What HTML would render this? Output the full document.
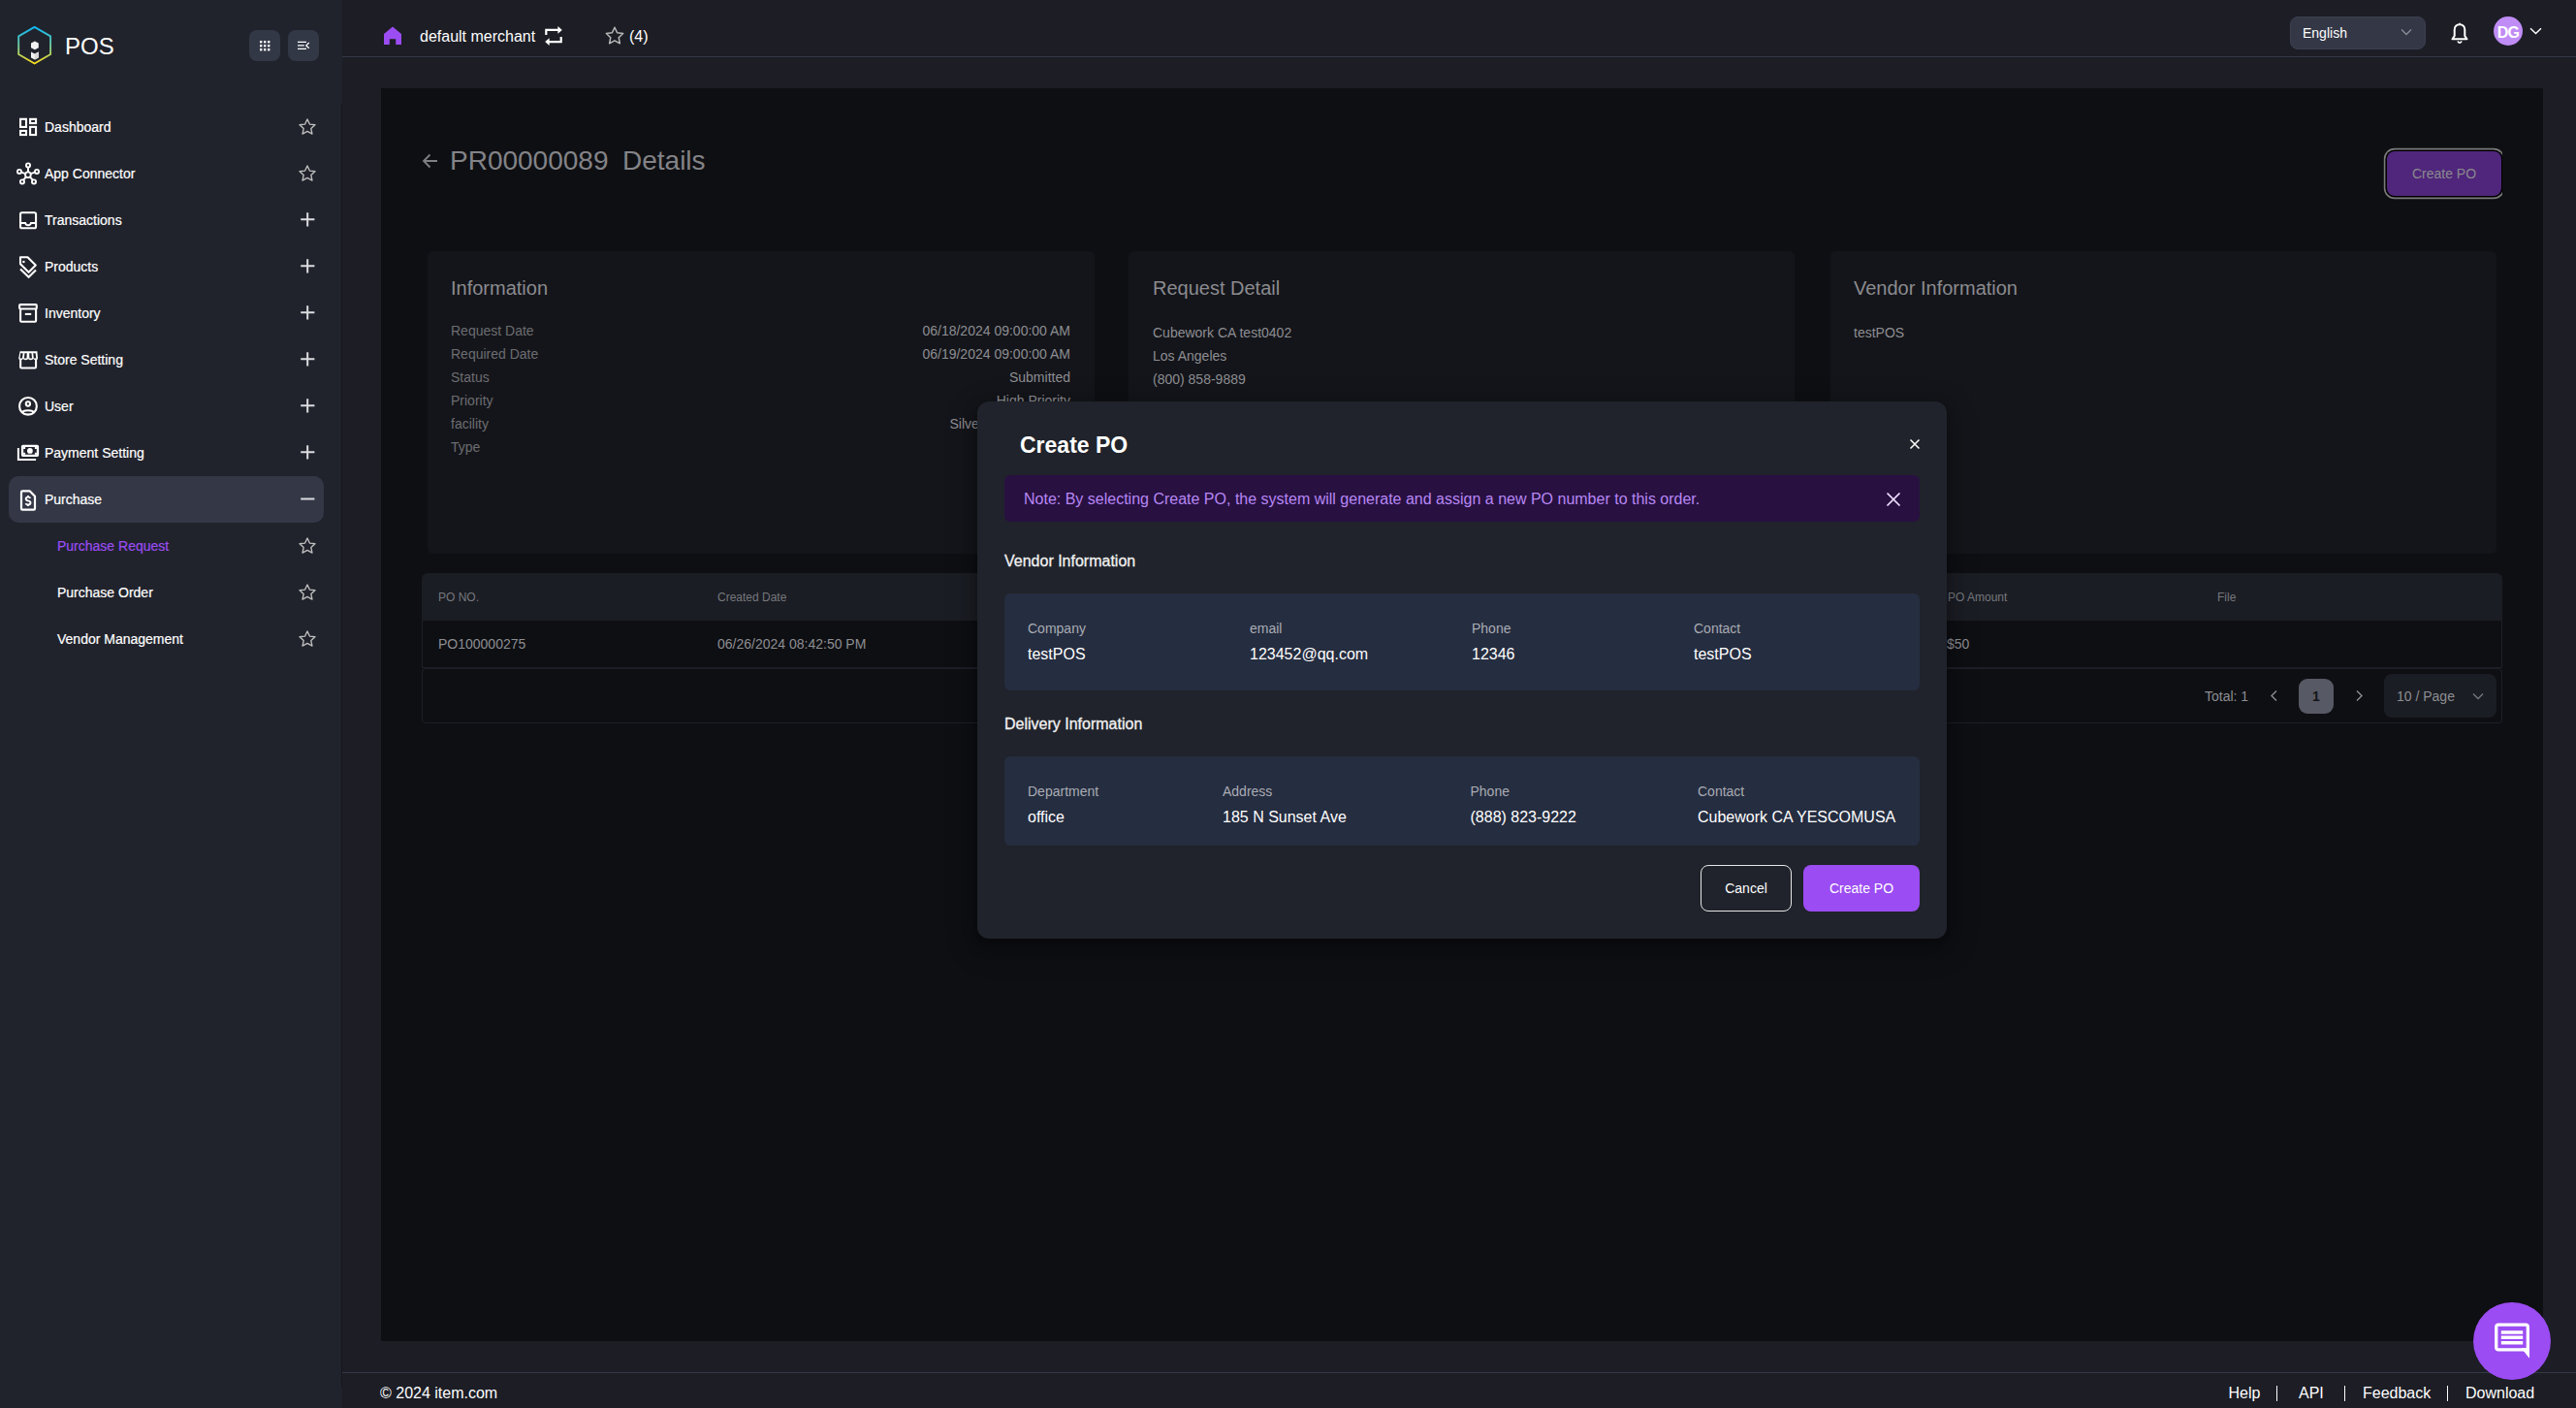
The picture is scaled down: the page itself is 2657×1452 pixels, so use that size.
<!DOCTYPE html>
<html>
<head>
<meta charset="utf-8">
<style>
*{margin:0;padding:0;box-sizing:border-box;}
html,body{width:2657px;height:1452px;overflow:hidden;background:#1c1d25;font-family:"Liberation Sans",sans-serif;}
.a{position:absolute;white-space:nowrap;line-height:1;}
svg{display:block;}
</style>
</head>
<body>
<div style="position:absolute;left:0px;top:0px;width:353px;height:1452px;background:#21232c;border-radius:0px;"></div>
<div style="position:absolute;left:352px;top:107px;width:1px;height:1324px;background:#17181e;border-radius:0px;"></div>
<div style="position:absolute;left:353px;top:0px;width:2304px;height:58px;background:#1c1d25;border-radius:0px;"></div>
<div style="position:absolute;left:353px;top:58px;width:2304px;height:1px;background:#343946;border-radius:0px;"></div>
<svg style="position:absolute;left:14px;top:24px;" width="44" height="46" viewBox="0 0 44 46" fill="none"><defs><linearGradient id="hg" x1="0" y1="0" x2="0" y2="1"><stop offset="0" stop-color="#0fb6f2"/><stop offset="0.5" stop-color="#6cc9a0"/><stop offset="1" stop-color="#fddc1c"/></linearGradient></defs><path d="M21.6 3.9 L38.1 13.4 L38.1 32 L21.6 41.5 L5.2 32 L5.2 13.4 Z" stroke="url(#hg)" stroke-width="1.9" stroke-linejoin="round"/><path d="M18 20.5 L21.9 18.6 L25.8 20.5 L25.8 25.3 L21.9 27.2 L18 25.3 Z" fill="#f2f2f2"/><path d="M18 29.5 L21.9 31.4 L25.8 29.5 L25.8 35.5 L21.9 37.4 L18 35.5 Z" fill="#f0f0f0"/><path d="M21.9 31.4 L25.8 29.5 L25.8 35.5 L21.9 37.4 Z" fill="#d8d8d8"/></svg>
<div class="a" style="left:67px;top:36.18px;font-size:24px;color:#fff;font-weight:400;">POS</div>
<div style="position:absolute;left:257px;top:31px;width:32px;height:32px;background:#333846;border-radius:8px;"></div>
<div style="position:absolute;left:297px;top:31px;width:32px;height:32px;background:#333846;border-radius:8px;"></div>
<svg style="position:absolute;left:267px;top:41px;" width="13" height="13" viewBox="0 0 13 13" fill="none"><rect x="1" y="1" width="2.4" height="2.4" fill="#fff"/><rect x="1" y="5" width="2.4" height="2.4" fill="#fff"/><rect x="1" y="9" width="2.4" height="2.4" fill="#fff"/><rect x="5" y="1" width="2.4" height="2.4" fill="#fff"/><rect x="5" y="5" width="2.4" height="2.4" fill="#fff"/><rect x="5" y="9" width="2.4" height="2.4" fill="#fff"/><rect x="9" y="1" width="2.4" height="2.4" fill="#fff"/><rect x="9" y="5" width="2.4" height="2.4" fill="#fff"/><rect x="9" y="9" width="2.4" height="2.4" fill="#fff"/></svg>
<svg style="position:absolute;left:305px;top:41px;" width="16" height="12" viewBox="0 0 16 12" fill="none"><path d="M2 2.4h9M2 5.9h6.8M2 9.4h9" stroke="#fff" stroke-width="1.25"/><path d="M13.8 3 L10.8 5.9 L13.8 8.8" stroke="#fff" stroke-width="1.3" fill="none"/></svg>
<div style="position:absolute;left:9px;top:491px;width:325px;height:48px;background:#333746;border-radius:10px;"></div>
<div class="a" style="left:46px;top:124.15px;font-size:14px;color:#fff;font-weight:400;-webkit-text-stroke:0.2px #fff;">Dashboard</div>
<div class="a" style="left:46px;top:172.15px;font-size:14px;color:#fff;font-weight:400;-webkit-text-stroke:0.2px #fff;">App Connector</div>
<div class="a" style="left:46px;top:220.15px;font-size:14px;color:#fff;font-weight:400;-webkit-text-stroke:0.2px #fff;">Transactions</div>
<div class="a" style="left:46px;top:268.15px;font-size:14px;color:#fff;font-weight:400;-webkit-text-stroke:0.2px #fff;">Products</div>
<div class="a" style="left:46px;top:316.15px;font-size:14px;color:#fff;font-weight:400;-webkit-text-stroke:0.2px #fff;">Inventory</div>
<div class="a" style="left:46px;top:364.15px;font-size:14px;color:#fff;font-weight:400;-webkit-text-stroke:0.2px #fff;">Store Setting</div>
<div class="a" style="left:46px;top:412.15px;font-size:14px;color:#fff;font-weight:400;-webkit-text-stroke:0.2px #fff;">User</div>
<div class="a" style="left:46px;top:460.15px;font-size:14px;color:#fff;font-weight:400;-webkit-text-stroke:0.2px #fff;">Payment Setting</div>
<div class="a" style="left:46px;top:508.15px;font-size:14px;color:#fff;font-weight:400;-webkit-text-stroke:0.2px #fff;">Purchase</div>
<div class="a" style="left:59px;top:556.15px;font-size:14px;color:#9b4cf2;font-weight:400;-webkit-text-stroke:0.2px #9b4cf2;">Purchase Request</div>
<div class="a" style="left:59px;top:604.15px;font-size:14px;color:#fff;font-weight:400;-webkit-text-stroke:0.2px #fff;">Purchase Order</div>
<div class="a" style="left:59px;top:652.15px;font-size:14px;color:#fff;font-weight:400;-webkit-text-stroke:0.2px #fff;">Vendor Management</div>
<svg style="position:absolute;left:306px;top:120px;" width="22" height="22" viewBox="0 0 24 24" fill="none"><path d="M12 3.2l2.6 5.6 6.1.7-4.5 4.2 1.2 6.1L12 16.8l-5.4 3 1.2-6.1-4.5-4.2 6.1-.7z" stroke="#bdbdbd" stroke-width="1.5" stroke-linejoin="round"/></svg>
<svg style="position:absolute;left:306px;top:168px;" width="22" height="22" viewBox="0 0 24 24" fill="none"><path d="M12 3.2l2.6 5.6 6.1.7-4.5 4.2 1.2 6.1L12 16.8l-5.4 3 1.2-6.1-4.5-4.2 6.1-.7z" stroke="#bdbdbd" stroke-width="1.5" stroke-linejoin="round"/></svg>
<svg style="position:absolute;left:309.8px;top:218.8px;" width="15" height="15" viewBox="0 0 15 15" fill="none"><path d="M7.2 0.3v14.2M0.2 7.3h14.2" stroke="#dcdde0" stroke-width="2"/></svg>
<svg style="position:absolute;left:309.8px;top:266.8px;" width="15" height="15" viewBox="0 0 15 15" fill="none"><path d="M7.2 0.3v14.2M0.2 7.3h14.2" stroke="#dcdde0" stroke-width="2"/></svg>
<svg style="position:absolute;left:309.8px;top:314.8px;" width="15" height="15" viewBox="0 0 15 15" fill="none"><path d="M7.2 0.3v14.2M0.2 7.3h14.2" stroke="#dcdde0" stroke-width="2"/></svg>
<svg style="position:absolute;left:309.8px;top:362.8px;" width="15" height="15" viewBox="0 0 15 15" fill="none"><path d="M7.2 0.3v14.2M0.2 7.3h14.2" stroke="#dcdde0" stroke-width="2"/></svg>
<svg style="position:absolute;left:309.8px;top:410.8px;" width="15" height="15" viewBox="0 0 15 15" fill="none"><path d="M7.2 0.3v14.2M0.2 7.3h14.2" stroke="#dcdde0" stroke-width="2"/></svg>
<svg style="position:absolute;left:309.8px;top:458.8px;" width="15" height="15" viewBox="0 0 15 15" fill="none"><path d="M7.2 0.3v14.2M0.2 7.3h14.2" stroke="#dcdde0" stroke-width="2"/></svg>
<svg style="position:absolute;left:309.8px;top:512.5px;" width="15" height="3" viewBox="0 0 15 3" fill="none"><path d="M0.2 1.5h14.2" stroke="#dcdde0" stroke-width="2"/></svg>
<svg style="position:absolute;left:306px;top:552px;" width="22" height="22" viewBox="0 0 24 24" fill="none"><path d="M12 3.2l2.6 5.6 6.1.7-4.5 4.2 1.2 6.1L12 16.8l-5.4 3 1.2-6.1-4.5-4.2 6.1-.7z" stroke="#bdbdbd" stroke-width="1.5" stroke-linejoin="round"/></svg>
<svg style="position:absolute;left:306px;top:600px;" width="22" height="22" viewBox="0 0 24 24" fill="none"><path d="M12 3.2l2.6 5.6 6.1.7-4.5 4.2 1.2 6.1L12 16.8l-5.4 3 1.2-6.1-4.5-4.2 6.1-.7z" stroke="#bdbdbd" stroke-width="1.5" stroke-linejoin="round"/></svg>
<svg style="position:absolute;left:306px;top:648px;" width="22" height="22" viewBox="0 0 24 24" fill="none"><path d="M12 3.2l2.6 5.6 6.1.7-4.5 4.2 1.2 6.1L12 16.8l-5.4 3 1.2-6.1-4.5-4.2 6.1-.7z" stroke="#bdbdbd" stroke-width="1.5" stroke-linejoin="round"/></svg>
<svg style="position:absolute;left:14px;top:116px;" width="30" height="30" viewBox="0 0 30 30" fill="none"><rect x="7.05" y="6.8" width="5.95" height="8.15" stroke="#fff" stroke-width="2.1" fill="none"/><rect x="17.1" y="6.85" width="5.95" height="4.2" stroke="#fff" stroke-width="2.1" fill="none"/><rect x="7.05" y="18.95" width="5.95" height="4.1" stroke="#fff" stroke-width="2.1" fill="none"/><rect x="17.1" y="14.9" width="5.95" height="8.15" stroke="#fff" stroke-width="2.1" fill="none"/></svg>
<svg style="position:absolute;left:14px;top:164px;" width="30" height="30" viewBox="0 0 30 30" fill="none"><g stroke="#fff" stroke-width="1.9" fill="none"><circle cx="14.9" cy="16.25" r="2.85"/><circle cx="15" cy="6.4" r="2.05"/><circle cx="6" cy="12.9" r="2.05"/><circle cx="24" cy="12.9" r="2.05"/><circle cx="8.95" cy="23.4" r="2.05"/><circle cx="21" cy="23.4" r="2.05"/><path d="M15 8.5V13.4M8 13.6L12.2 15.2M22 13.6L17.7 15.2M10.1 21.6L12.9 18.5M19.8 21.6L17 18.5"/></g></svg>
<svg style="position:absolute;left:14px;top:212px;" width="30" height="30" viewBox="0 0 30 30" fill="none"><rect x="7.05" y="7.25" width="16" height="16" rx="1.6" stroke="#fff" stroke-width="2.1" fill="none"/><path d="M7 18H12.1C12.6 19.6 13.6 20.3 15.05 20.3S17.5 19.6 18 18H23" stroke="#fff" stroke-width="2.1" fill="none"/></svg>
<svg style="position:absolute;left:14px;top:260px;" width="30" height="30" viewBox="0 0 30 30" fill="none"><path d="M7 5.3H14.5L22.8 13.6L15.6 20.8L7 12.3Z" stroke="#fff" stroke-width="2.1" fill="none" stroke-linejoin="round"/><rect x="9.3" y="8.9" width="2.2" height="2.2" fill="#fff"/><path d="M7 17.5L15.6 25.7L23 18.5" stroke="#fff" stroke-width="2.1" fill="none"/></svg>
<svg style="position:absolute;left:14px;top:308px;" width="30" height="30" viewBox="0 0 30 30" fill="none"><rect x="6.1" y="6.1" width="17.7" height="4.4" rx="1" stroke="#fff" stroke-width="2.1" fill="none"/><path d="M7.1 10.5V22.8Q7.1 23.8 8.1 23.8H22.1Q23.1 23.8 23.1 22.8V10.5" stroke="#fff" stroke-width="2.1" fill="none"/><rect x="11.8" y="14.9" width="6.4" height="2.1" fill="#fff"/></svg>
<svg style="position:absolute;left:14px;top:354px;" width="30" height="30" viewBox="0 0 30 30" fill="none"><path d="M6.6 8.2H24.4L25 15.6Q25 17.3 23.2 17.3Q21.3 17.3 20.3 15.9Q19.3 17.3 17.6 17.3Q15.9 17.3 15.1 15.9Q14.2 17.3 12.5 17.3Q10.8 17.3 9.9 15.9Q8.9 17.3 7.2 17.3Q5.2 17.3 5.2 15.6Z" fill="#fff"/><path d="M7.2 10.3H9.7L8.9 15.6H6.6Z M11.4 10.3H13.7L13.5 15.6H10.9Z M16.2 10.3H18.5L19 15.6H16.4Z M20.2 10.3H22.6L23.3 15.6H20.8Z" fill="#21232c"/><path d="M7.15 16.5V24.5Q7.15 25.55 8.2 25.55H22Q23.05 25.55 23.05 24.5V16.5" stroke="#fff" stroke-width="2.1" fill="none"/></svg>
<svg style="position:absolute;left:14px;top:404px;" width="30" height="30" viewBox="0 0 30 30" fill="none"><defs><clipPath id="uc"><circle cx="14.95" cy="14.9" r="9"/></clipPath></defs><circle cx="14.95" cy="14.9" r="8.9" stroke="#fff" stroke-width="2.1" fill="none"/><circle cx="14.9" cy="12.5" r="2.15" stroke="#fff" stroke-width="2" fill="none"/><ellipse cx="14.9" cy="21.4" rx="5.6" ry="2.2" stroke="#fff" stroke-width="2" fill="none" clip-path="url(#uc)"/></svg>
<svg style="position:absolute;left:14px;top:452px;" width="30" height="30" viewBox="0 0 30 30" fill="none"><rect x="9.05" y="7.95" width="15.9" height="9.9" rx="0.6" stroke="#fff" stroke-width="2.3" fill="none"/><rect x="10.1" y="9" width="2" height="2" fill="#fff"/><rect x="21.9" y="9" width="2" height="2" fill="#fff"/><rect x="10.1" y="14.8" width="2" height="2" fill="#fff"/><rect x="21.9" y="14.8" width="2" height="2" fill="#fff"/><circle cx="16.9" cy="12.9" r="2.9" fill="#fff"/><path d="M4.9 9.9V22H23.1" stroke="#fff" stroke-width="2" fill="none"/></svg>
<svg style="position:absolute;left:14px;top:500px;" width="30" height="30" viewBox="0 0 30 30" fill="none"><path d="M8 7.5Q8 6.3 9.2 6.3H16.6L22 11.7V24.5Q22 25.7 20.8 25.7H9.2Q8 25.7 8 24.5Z" stroke="#fff" stroke-width="2.2" fill="none" stroke-linejoin="round"/><path d="M17.4 13.9C17 13 16.2 12.6 15 12.6C13.6 12.6 12.7 13.4 12.7 14.5C12.7 15.9 14 16.2 15 16.4C16.2 16.6 17.5 17.1 17.5 18.6C17.5 19.8 16.5 20.5 15 20.5C13.8 20.5 12.9 20 12.5 19.1" stroke="#fff" stroke-width="1.9" fill="none"/><path d="M15 11.1V12.8M15 20.3V22" stroke="#fff" stroke-width="1.9"/></svg>
<svg style="position:absolute;left:396px;top:27px;" width="18" height="19" viewBox="0 0 18 19" fill="none"><path d="M9 0.5 L18 8 V19 H12.2 V13.2 H5.8 V19 H0 V8 Z" fill="#9b4cf2"/></svg>
<div class="a" style="left:433px;top:29.96px;font-size:16px;color:#fff;font-weight:400;">default merchant</div>
<svg style="position:absolute;left:559.5px;top:26.2px;" width="22" height="22" viewBox="0 0 20 20" fill="none"><path d="M3 9 V4.5 H16" stroke="#fff" stroke-width="2" fill="none"/><path d="M14 1 L18 4.5 L14 8 Z" fill="#fff"/><path d="M17 11 V15.5 H4" stroke="#fff" stroke-width="2" fill="none"/><path d="M6 12 L2 15.5 L6 19 Z" fill="#fff"/></svg>
<svg style="position:absolute;left:621.5px;top:25px;" width="24" height="24" viewBox="0 0 24 24" fill="none"><path d="M12 3.2l2.6 5.6 6.1.7-4.5 4.2 1.2 6.1L12 16.8l-5.4 3 1.2-6.1-4.5-4.2 6.1-.7z" stroke="#b8b8b8" stroke-width="1.5" stroke-linejoin="round"/></svg>
<div class="a" style="left:649px;top:29.96px;font-size:16px;color:#fff;font-weight:400;">(4)</div>
<div style="position:absolute;left:2362px;top:17px;width:140px;height:34px;background:#333746;border-radius:8px;border:1px solid #3b3f4d;"></div>
<div class="a" style="left:2375px;top:27.15px;font-size:14px;color:#fff;font-weight:400;">English</div>
<svg style="position:absolute;left:2476px;top:29px;" width="12" height="8" viewBox="0 0 12 8" fill="none"><path d="M1 1.5 L6 6.5 L11 1.5" stroke="#8a8d96" stroke-width="1.3" fill="none"/></svg>
<svg style="position:absolute;left:2528px;top:23px;" width="18" height="22" viewBox="0 0 18 22" fill="none"><path d="M9 2.2c-3.2 0-5.3 2.4-5.3 5.6v6.2L1.5 17.2h15L14.3 14V7.8C14.3 4.6 12.2 2.2 9 2.2Z" stroke="#fff" stroke-width="2" fill="none" stroke-linejoin="round"/><path d="M9 0.8v1.6" stroke="#fff" stroke-width="1.6"/><path d="M7 19.5c0.4 1 1.1 1.5 2 1.5s1.6-0.5 2-1.5" stroke="#fff" stroke-width="1.8" fill="none"/></svg>
<div style="position:absolute;left:2572px;top:17px;width:30px;height:30px;background:#c08cf5;border-radius:15px;"></div>
<div class="a" style="left:2287px;width:600px;text-align:center;top:25.96px;font-size:16px;color:#fff;font-weight:700;letter-spacing:-0.8px;">DG</div>
<svg style="position:absolute;left:2609px;top:28px;" width="13" height="8" viewBox="0 0 13 8" fill="none"><path d="M1 1.2 L6.5 6.5 L12 1.2" stroke="#fff" stroke-width="1.4" fill="none"/></svg>
<div style="position:absolute;left:393px;top:91px;width:2230px;height:1292px;background:#0e0f13;border-radius:0px;"></div>
<svg style="position:absolute;left:434.5px;top:157.5px;" width="17" height="16" viewBox="0 0 17 16" fill="none"><path d="M16 8H2M8.5 1.5 L2 8 L8.5 14.5" stroke="#7f7f83" stroke-width="1.8" fill="none"/></svg>
<div class="a" style="left:464px;top:151.90px;font-size:28px;color:#838387;font-weight:400;">PR00000089</div>
<div class="a" style="left:642px;top:151.90px;font-size:28px;color:#838387;font-weight:400;">Details</div>
<div style="position:absolute;left:2455px;top:149px;width:126px;height:60px;overflow:hidden;"><div style="position:absolute;left:7px;top:7px;width:118px;height:46px;border-radius:8px;background:#4f267b;box-shadow:0 0 0 1.6px #000,0 0 0 3.2px #7a7a7a;"></div></div>
<div class="a" style="left:2221px;width:600px;text-align:center;top:172.15px;font-size:14px;color:#8a8a8e;font-weight:400;">Create PO</div>
<div style="position:absolute;left:441px;top:259px;width:688px;height:312px;background:#14151a;border-radius:6px;"></div>
<div style="position:absolute;left:1164px;top:259px;width:687px;height:312px;background:#14151a;border-radius:6px;"></div>
<div style="position:absolute;left:1888px;top:259px;width:687px;height:312px;background:#14151a;border-radius:6px;"></div>
<div class="a" style="left:465px;top:287.07px;font-size:20px;color:#8b8b8f;font-weight:400;">Information</div>
<div class="a" style="left:1189px;top:287.07px;font-size:20px;color:#8b8b8f;font-weight:400;">Request Detail</div>
<div class="a" style="left:1912px;top:287.07px;font-size:20px;color:#8b8b8f;font-weight:400;">Vendor Information</div>
<div class="a" style="left:465px;top:333.95px;font-size:14px;color:#6c6d71;font-weight:400;">Request Date</div>
<div class="a" style="right:1553px;top:333.95px;font-size:14px;color:#8d8e92;font-weight:400;">06/18/2024 09:00:00 AM</div>
<div class="a" style="left:465px;top:357.95px;font-size:14px;color:#6c6d71;font-weight:400;">Required Date</div>
<div class="a" style="right:1553px;top:357.95px;font-size:14px;color:#8d8e92;font-weight:400;">06/19/2024 09:00:00 AM</div>
<div class="a" style="left:465px;top:381.95px;font-size:14px;color:#6c6d71;font-weight:400;">Status</div>
<div class="a" style="right:1553px;top:381.95px;font-size:14px;color:#8d8e92;font-weight:400;">Submitted</div>
<div class="a" style="left:465px;top:405.95px;font-size:14px;color:#6c6d71;font-weight:400;">Priority</div>
<div class="a" style="right:1553px;top:405.95px;font-size:14px;color:#8d8e92;font-weight:400;">High Priority</div>
<div class="a" style="left:465px;top:429.95px;font-size:14px;color:#6c6d71;font-weight:400;">facility</div>
<div class="a" style="left:979.5px;top:429.95px;font-size:14px;color:#8d8e92;font-weight:400;">Silver Lake Warehouse</div>
<div class="a" style="left:465px;top:453.95px;font-size:14px;color:#6c6d71;font-weight:400;">Type</div>
<div class="a" style="right:1553px;top:453.95px;font-size:14px;color:#8d8e92;font-weight:400;">Normal</div>
<div class="a" style="left:1189px;top:336.35px;font-size:14px;color:#8d8e92;font-weight:400;">Cubework CA test0402</div>
<div class="a" style="left:1189px;top:360.35px;font-size:14px;color:#8d8e92;font-weight:400;">Los Angeles</div>
<div class="a" style="left:1189px;top:384.35px;font-size:14px;color:#8d8e92;font-weight:400;">(800) 858-9889</div>
<div class="a" style="left:1912px;top:336.35px;font-size:14px;color:#8d8e92;font-weight:400;">testPOS</div>
<div style="position:absolute;left:435px;top:591px;width:2146px;height:49px;background:#1b1d24;border-radius:0px;border-radius:6px 6px 0 0;"></div>
<div style="position:absolute;left:435px;top:640px;width:2146px;height:49px;background:none;border-radius:0px;border:1px solid #1d1f27;border-top:none;"></div>
<div style="position:absolute;left:435px;top:689px;width:2146px;height:57px;background:none;border-radius:0px;border:1px solid #1d1f27;border-radius:4px;"></div>
<div class="a" style="left:452px;top:610.14px;font-size:12px;color:#76787d;font-weight:400;">PO NO.</div>
<div class="a" style="left:740px;top:610.14px;font-size:12px;color:#76787d;font-weight:400;">Created Date</div>
<div class="a" style="left:2009px;top:610.14px;font-size:12px;color:#76787d;font-weight:400;">PO Amount</div>
<div class="a" style="left:2287px;top:610.14px;font-size:12px;color:#76787d;font-weight:400;">File</div>
<div class="a" style="left:452px;top:657.15px;font-size:14px;color:#8d8e92;font-weight:400;">PO100000275</div>
<div class="a" style="left:740px;top:657.15px;font-size:14px;color:#8d8e92;font-weight:400;">06/26/2024 08:42:50 PM</div>
<div class="a" style="left:2008px;top:657.15px;font-size:14px;color:#8d8e92;font-weight:400;">$50</div>
<div class="a" style="left:2274px;top:711.35px;font-size:14px;color:#8d8e92;font-weight:400;">Total: 1</div>
<svg style="position:absolute;left:2341px;top:711px;" width="9" height="13" viewBox="0 0 9 13" fill="none"><path d="M7 1.5 L2 6.5 L7 11.5" stroke="#8d8e92" stroke-width="1.4" fill="none"/></svg>
<div style="position:absolute;left:2371px;top:700px;width:36px;height:36px;background:#575964;border-radius:9px;"></div>
<div class="a" style="left:2089px;width:600px;text-align:center;top:711.35px;font-size:14px;color:#141519;font-weight:700;">1</div>
<svg style="position:absolute;left:2429px;top:711px;" width="9" height="13" viewBox="0 0 9 13" fill="none"><path d="M2 1.5 L7 6.5 L2 11.5" stroke="#8d8e92" stroke-width="1.4" fill="none"/></svg>
<div style="position:absolute;left:2459px;top:695px;width:116px;height:45px;background:#1b1d24;border-radius:8px;"></div>
<div class="a" style="left:2472px;top:711.35px;font-size:14px;color:#8d8e92;font-weight:400;">10 / Page</div>
<svg style="position:absolute;left:2550px;top:714px;" width="12" height="8" viewBox="0 0 12 8" fill="none"><path d="M1 1.5 L6 6.5 L11 1.5" stroke="#76787d" stroke-width="1.3" fill="none"/></svg>
<div style="position:absolute;left:353px;top:1415px;width:2304px;height:1px;background:#343946;border-radius:0px;"></div>
<div class="a" style="left:392px;top:1429.46px;font-size:16px;color:#fff;font-weight:400;">© 2024 item.com</div>
<div class="a" style="left:2298.5px;top:1429.46px;font-size:16px;color:#fff;font-weight:400;">Help</div>
<div class="a" style="left:2371px;top:1429.46px;font-size:16px;color:#fff;font-weight:400;">API</div>
<div class="a" style="left:2437px;top:1429.46px;font-size:16px;color:#fff;font-weight:400;">Feedback</div>
<div class="a" style="left:2543px;top:1429.46px;font-size:16px;color:#fff;font-weight:400;">Download</div>
<div style="position:absolute;left:2347.5px;top:1429px;width:1.6px;height:16px;background:#fff;border-radius:0px;"></div>
<div style="position:absolute;left:2417.5px;top:1429px;width:1.6px;height:16px;background:#fff;border-radius:0px;"></div>
<div style="position:absolute;left:2523.5px;top:1429px;width:1.6px;height:16px;background:#fff;border-radius:0px;"></div>
<div style="position:absolute;left:1008px;top:414px;width:1000px;height:554px;background:#20232b;border-radius:12px;box-shadow:0 6px 16px 0 rgba(0,0,0,.25),0 3px 6px -4px rgba(0,0,0,.35),0 9px 28px 8px rgba(0,0,0,.15);"></div>
<div class="a" style="left:1052px;top:448.03px;font-size:23px;color:#fff;font-weight:700;">Create PO</div>
<svg style="position:absolute;left:1969px;top:452px;" width="12" height="12" viewBox="0 0 12 12" fill="none"><path d="M1.5 1.5 L10.5 10.5M10.5 1.5 L1.5 10.5" stroke="#fff" stroke-width="1.5"/></svg>
<div style="position:absolute;left:1036px;top:490px;width:944px;height:48px;background:#281041;border-radius:6px;"></div>
<div class="a" style="left:1056px;top:507.46px;font-size:16px;color:#b787f4;font-weight:400;">Note: By selecting Create PO, the system will generate and assign a new PO number to this order.</div>
<svg style="position:absolute;left:1945px;top:507px;" width="16" height="16" viewBox="0 0 16 16" fill="none"><path d="M1.5 1.5 L14.5 14.5M14.5 1.5 L1.5 14.5" stroke="#f0e0ff" stroke-width="1.7"/></svg>
<div class="a" style="left:1036px;top:571.46px;font-size:16px;color:#f2f2f2;font-weight:400;-webkit-text-stroke:0.3px #f2f2f2;">Vendor Information</div>
<div style="position:absolute;left:1036px;top:612px;width:944px;height:100px;background:#252d40;border-radius:6px;"></div>
<div class="a" style="left:1060px;top:640.55px;font-size:14px;color:#a9acb4;font-weight:400;">Company</div>
<div class="a" style="left:1060px;top:667.46px;font-size:16px;color:#fff;font-weight:400;">testPOS</div>
<div class="a" style="left:1289px;top:640.55px;font-size:14px;color:#a9acb4;font-weight:400;">email</div>
<div class="a" style="left:1289px;top:667.46px;font-size:16px;color:#fff;font-weight:400;">123452@qq.com</div>
<div class="a" style="left:1518px;top:640.55px;font-size:14px;color:#a9acb4;font-weight:400;">Phone</div>
<div class="a" style="left:1518px;top:667.46px;font-size:16px;color:#fff;font-weight:400;">12346</div>
<div class="a" style="left:1747px;top:640.55px;font-size:14px;color:#a9acb4;font-weight:400;">Contact</div>
<div class="a" style="left:1747px;top:667.46px;font-size:16px;color:#fff;font-weight:400;">testPOS</div>
<div class="a" style="left:1036px;top:739.46px;font-size:16px;color:#f2f2f2;font-weight:400;-webkit-text-stroke:0.3px #f2f2f2;">Delivery Information</div>
<div style="position:absolute;left:1036px;top:780px;width:944px;height:92px;background:#252d40;border-radius:6px;"></div>
<div class="a" style="left:1060px;top:809.45px;font-size:14px;color:#a9acb4;font-weight:400;">Department</div>
<div class="a" style="left:1060px;top:834.66px;font-size:16px;color:#fff;font-weight:400;">office</div>
<div class="a" style="left:1261px;top:809.45px;font-size:14px;color:#a9acb4;font-weight:400;">Address</div>
<div class="a" style="left:1261px;top:834.66px;font-size:16px;color:#fff;font-weight:400;">185 N Sunset Ave</div>
<div class="a" style="left:1516.5px;top:809.45px;font-size:14px;color:#a9acb4;font-weight:400;">Phone</div>
<div class="a" style="left:1516.5px;top:834.66px;font-size:16px;color:#fff;font-weight:400;">(888) 823-9222</div>
<div class="a" style="left:1751px;top:809.45px;font-size:14px;color:#a9acb4;font-weight:400;">Contact</div>
<div class="a" style="left:1751px;top:834.66px;font-size:16px;color:#fff;font-weight:400;">Cubework CA YESCOMUSA</div>
<div style="position:absolute;left:1754px;top:892px;width:94px;height:48px;background:none;border-radius:8px;border:1px solid #e6e6e6;"></div>
<div class="a" style="left:1501px;width:600px;text-align:center;top:909.15px;font-size:14px;color:#fff;font-weight:400;">Cancel</div>
<div style="position:absolute;left:1860px;top:892px;width:120px;height:48px;background:#9b4cf2;border-radius:8px;"></div>
<div class="a" style="left:1620px;width:600px;text-align:center;top:909.15px;font-size:14px;color:#fff;font-weight:400;">Create PO</div>
<div style="position:absolute;left:2551px;top:1343px;width:80px;height:80px;background:#9b4cf2;border-radius:40px;"></div>
<svg style="position:absolute;left:2572px;top:1364px;" width="38" height="40" viewBox="0 0 38 40" fill="none"><path d="M2.75 4.5Q2.75 2.15 5 2.15H33Q35.35 2.15 35.35 4.5V27.95H5Q2.75 27.95 2.75 25.7Z" stroke="#fff" stroke-width="3.3" fill="none" stroke-linejoin="round"/><path d="M28.5 26.3H37V36.8Z" fill="#fff"/><path d="M7.8 9.9h22.4M7.8 15.3h22.4M7.8 20.7h22.4" stroke="#fff" stroke-width="3.5"/></svg>
</body>
</html>
